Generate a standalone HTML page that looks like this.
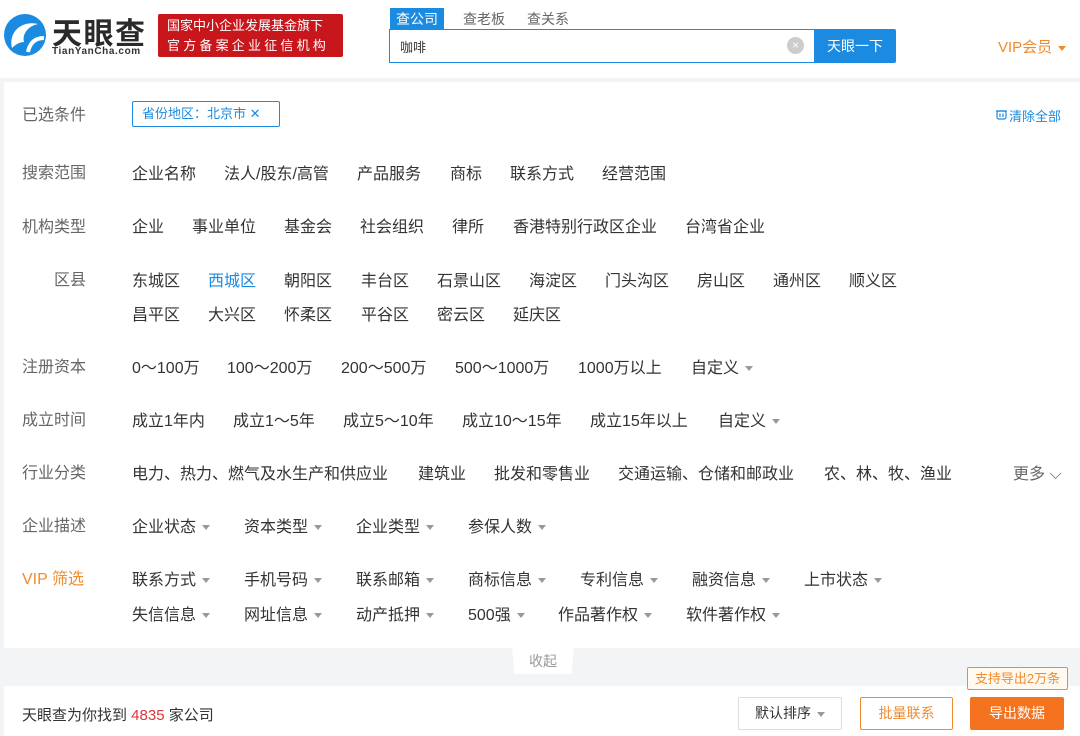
<!DOCTYPE html>
<html><head><meta charset="utf-8"><style>
*{margin:0;padding:0;box-sizing:border-box}
body{width:1080px;height:736px;background:#f3f4f6;font-family:"Liberation Sans","Noto Sans CJK SC",sans-serif;position:relative;overflow:hidden;color:#333}
.a{position:absolute;white-space:nowrap}
.hdr{position:absolute;left:0;top:0;width:1080px;height:78px;background:#fff}
.panel{position:absolute;left:4px;top:82px;width:1076px;height:566px;background:#fff}
.lb{font-size:16px;color:#666;left:22px;margin-top:-3px}
.it{font-size:16px;color:#333;margin-top:-3px}
.tri{display:inline-block;width:0;height:0;border-left:4px solid transparent;border-right:4px solid transparent;border-top:5px solid #999;vertical-align:middle;margin-left:6px}
.btn{position:absolute;font-size:14px;text-align:center;border-radius:2px}
</style></head><body>
<div class="hdr">
 <svg class="a" style="left:2px;top:12px" width="46" height="46" viewBox="0 0 46 46"><circle cx="23" cy="23" r="21" fill="#1a8be0"/><path d="M10 36 C6 20 20 8 36 12 C26 14 20 22 22 30 C18 30 14 32 10 36Z" fill="#fff"/><path d="M26 40 C28 30 34 26 42 26" stroke="#fff" stroke-width="4" fill="none"/></svg>
 <div class="a" style="left:52px;top:9px;font-size:30px;font-weight:bold;color:#2a2a2a;letter-spacing:1.5px">天眼查</div>
 <div class="a" style="left:52px;top:46px;font-size:10px;font-weight:bold;color:#333;letter-spacing:0.6px">TianYanCha.com</div>
 <div class="a" style="left:158px;top:14px;width:185px;height:43px;background:#c8161d;border-radius:2px;color:#fff;font-size:13px;line-height:20px;padding:2px 0 0 9px">国家中小企业发展基金旗下<br><span style="letter-spacing:3.2px">官方备案企业征信机构</span></div>
 <div class="a" style="left:390px;top:8px;width:54px;height:22px;background:#1a8be0;color:#fff;font-size:14px;text-align:center;line-height:22px">查公司</div>
 <div class="a" style="left:463px;top:9px;font-size:14px;color:#666">查老板</div>
 <div class="a" style="left:527px;top:9px;font-size:14px;color:#666">查关系</div>
 <div class="a" style="left:389px;top:29px;width:426px;height:34px;border:1px solid #1a8be0;border-right:none"></div>
 <div class="a" style="left:400px;top:37px;font-size:13px;color:#333">咖啡</div>
 <div class="a" style="left:787px;top:37px;width:17px;height:17px;border-radius:50%;background:#ccc;color:#fff;font-size:12px;text-align:center;line-height:17px">×</div>
 <div class="a" style="left:814px;top:29px;width:82px;height:34px;background:#1a8be0;color:#fff;font-size:14px;text-align:center;line-height:34px;border-radius:0 2px 2px 0">天眼一下</div>
 <div class="a" style="left:998px;top:36px;font-size:15px;color:#f08c2e">VIP会员 <span class="tri" style="border-top-color:#f08c2e;margin-left:2px"></span></div>
</div>
<div class="panel"></div>

<div class="a lb" style="top:104px">已选条件</div>
<div class="a" style="left:132px;top:101px;width:148px;height:26px;border:1px solid #1a8be0;border-radius:2px;font-size:13px;color:#1a8be0;line-height:24px;padding-left:9px">省份地区：北京市 ✕</div>
<svg class="a" style="left:996px;top:109px" width="11" height="11" viewBox="0 0 11 11"><rect x="1" y="2" width="9" height="8" rx="2" fill="none" stroke="#1a8be0" stroke-width="1.2"/><path d="M0 2H11M4 4.5V8M7 4.5V8" stroke="#1a8be0" stroke-width="1.2"/></svg>
<div class="a" style="left:1009px;top:106px;font-size:13px;color:#1a8be0">清除全部</div>

<div class="a lb" style="top:162px">搜索范围</div>
<div class="a it" style="left:132px;top:163px">企业名称</div><div class="a it" style="left:224px;top:163px">法人/股东/高管</div><div class="a it" style="left:357px;top:163px">产品服务</div><div class="a it" style="left:450px;top:163px">商标</div><div class="a it" style="left:510px;top:163px">联系方式</div><div class="a it" style="left:602px;top:163px">经营范围</div>

<div class="a lb" style="top:216px">机构类型</div>
<div class="a it" style="left:132px;top:216px">企业</div><div class="a it" style="left:192px;top:216px">事业单位</div><div class="a it" style="left:284px;top:216px">基金会</div><div class="a it" style="left:360px;top:216px">社会组织</div><div class="a it" style="left:452px;top:216px">律所</div><div class="a it" style="left:513px;top:216px">香港特别行政区企业</div><div class="a it" style="left:685px;top:216px">台湾省企业</div>

<div class="a lb" style="top:269px;left:54px">区县</div>
<div class="a it" style="left:132px;top:270px">东城区</div><div class="a it" style="left:208px;top:270px;color:#1a8be0">西城区</div><div class="a it" style="left:284px;top:270px">朝阳区</div><div class="a it" style="left:361px;top:270px">丰台区</div><div class="a it" style="left:437px;top:270px">石景山区</div><div class="a it" style="left:529px;top:270px">海淀区</div><div class="a it" style="left:605px;top:270px">门头沟区</div><div class="a it" style="left:697px;top:270px">房山区</div><div class="a it" style="left:773px;top:270px">通州区</div><div class="a it" style="left:849px;top:270px">顺义区</div>
<div class="a it" style="left:132px;top:304px">昌平区</div><div class="a it" style="left:208px;top:304px">大兴区</div><div class="a it" style="left:284px;top:304px">怀柔区</div><div class="a it" style="left:361px;top:304px">平谷区</div><div class="a it" style="left:437px;top:304px">密云区</div><div class="a it" style="left:513px;top:304px">延庆区</div>

<div class="a lb" style="top:356px">注册资本</div>
<div class="a it" style="left:132px;top:357px">0～100万</div><div class="a it" style="left:227px;top:357px">100～200万</div><div class="a it" style="left:341px;top:357px">200～500万</div><div class="a it" style="left:455px;top:357px">500～1000万</div><div class="a it" style="left:578px;top:357px">1000万以上</div><div class="a it" style="left:691px;top:357px">自定义<span class="tri"></span></div>

<div class="a lb" style="top:409px">成立时间</div>
<div class="a it" style="left:132px;top:410px">成立1年内</div><div class="a it" style="left:233px;top:410px">成立1～5年</div><div class="a it" style="left:343px;top:410px">成立5～10年</div><div class="a it" style="left:462px;top:410px">成立10～15年</div><div class="a it" style="left:590px;top:410px">成立15年以上</div><div class="a it" style="left:718px;top:410px">自定义<span class="tri"></span></div>

<div class="a lb" style="top:462px">行业分类</div>
<div class="a it" style="left:132px;top:463px">电力、热力、燃气及水生产和供应业</div><div class="a it" style="left:418px;top:463px">建筑业</div><div class="a it" style="left:494px;top:463px">批发和零售业</div><div class="a it" style="left:618px;top:463px">交通运输、仓储和邮政业</div><div class="a it" style="left:824px;top:463px">农、林、牧、渔业</div><div class="a it" style="left:1013px;top:463px;color:#666">更多 ⌵</div>

<div class="a lb" style="top:515px">企业描述</div>
<div class="a it" style="left:132px;top:516px">企业状态<span class="tri"></span></div><div class="a it" style="left:244px;top:516px">资本类型<span class="tri"></span></div><div class="a it" style="left:356px;top:516px">企业类型<span class="tri"></span></div><div class="a it" style="left:468px;top:516px">参保人数<span class="tri"></span></div>

<div class="a lb" style="top:568px;color:#f08c2e">VIP 筛选</div>
<div class="a it" style="left:132px;top:569px">联系方式<span class="tri"></span></div><div class="a it" style="left:244px;top:569px">手机号码<span class="tri"></span></div><div class="a it" style="left:356px;top:569px">联系邮箱<span class="tri"></span></div><div class="a it" style="left:468px;top:569px">商标信息<span class="tri"></span></div><div class="a it" style="left:580px;top:569px">专利信息<span class="tri"></span></div><div class="a it" style="left:692px;top:569px">融资信息<span class="tri"></span></div><div class="a it" style="left:804px;top:569px">上市状态<span class="tri"></span></div>
<div class="a it" style="left:132px;top:604px">失信信息<span class="tri"></span></div><div class="a it" style="left:244px;top:604px">网址信息<span class="tri"></span></div><div class="a it" style="left:356px;top:604px">动产抵押<span class="tri"></span></div><div class="a it" style="left:468px;top:604px">500强<span class="tri"></span></div><div class="a it" style="left:558px;top:604px">作品著作权<span class="tri"></span></div><div class="a it" style="left:686px;top:604px">软件著作权<span class="tri"></span></div>

<div class="a" style="left:512px;top:646px;width:62px;height:28px;background:#fff;clip-path:polygon(0 0,100% 0,96% 100%,4% 100%);font-size:14px;color:#999;text-align:center;line-height:30px">收起</div>

<div class="a" style="left:4px;top:686px;width:1076px;height:50px;background:#fff"></div>
<div class="a" style="left:22px;top:704px;font-size:15px;color:#333">天眼查为你找到 <span style="color:#d9363e">4835</span> 家公司</div>
<div class="btn" style="left:738px;top:697px;width:104px;height:33px;border:1px solid #ddd;line-height:31px;color:#333">默认排序<span class="tri"></span></div>
<div class="btn" style="left:860px;top:697px;width:93px;height:33px;border:1px solid #f08c2e;line-height:31px;color:#f08c2e">批量联系</div>
<div class="btn" style="left:970px;top:697px;width:94px;height:33px;background:#f5731f;line-height:33px;color:#fff">导出数据</div>
<div class="btn" style="left:967px;top:667px;width:101px;height:23px;border:1px solid #f08c2e;background:#fff9ef;line-height:21px;color:#f08c2e;font-size:13px">支持导出2万条</div>
</body></html>
